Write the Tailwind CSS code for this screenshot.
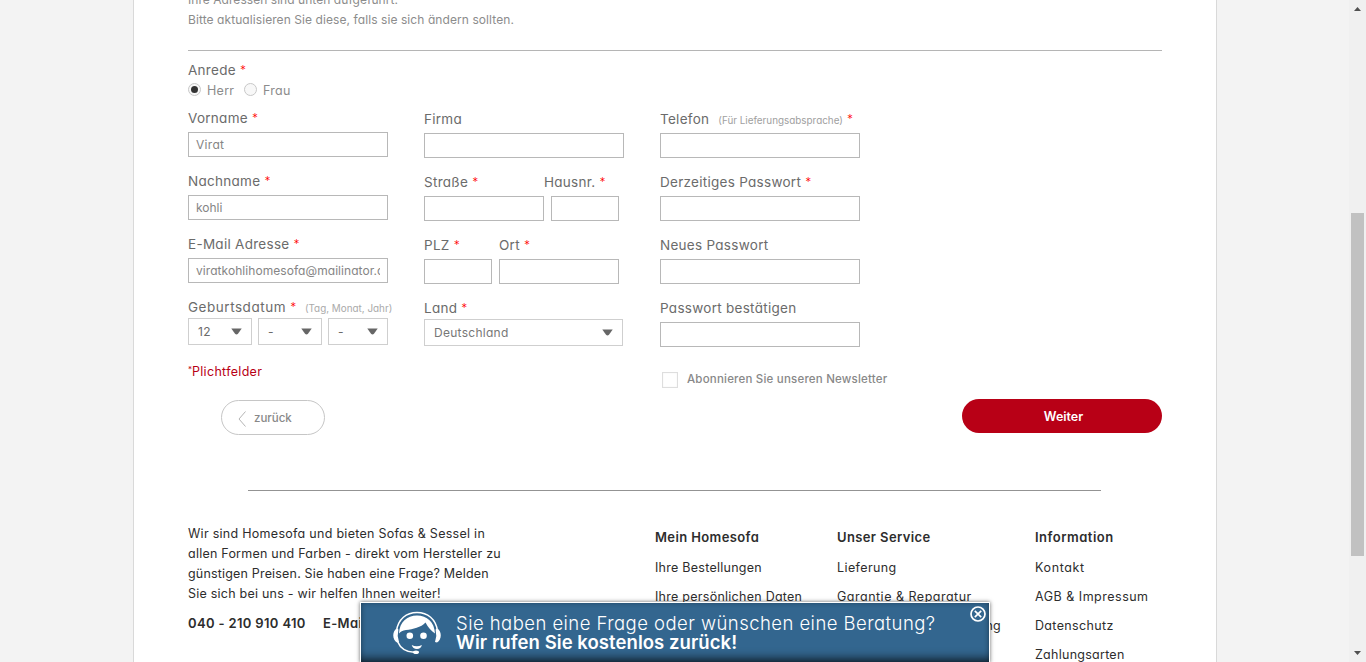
<!DOCTYPE html>
<html lang="de">
<head>
<meta charset="utf-8">
<title>Homesofa</title>
<script src="https://cdn.jsdelivr.net/npm/@tailwindcss/browser@4"></script>
</head>
<body class="relative h-[662px] overflow-hidden bg-[#f3f3f3] font-['Inter',sans-serif] [font-feature-settings:'cv11'] text-[13.5px] leading-5 tracking-[0.28px] text-[#6b6b6b] whitespace-nowrap">
<div class="flex h-full">
<main class="ml-[133px] h-full w-[1084px] overflow-hidden border-x border-[#d9d9d9] bg-white pl-[54px] pr-[54px]">
  <div class="-mt-[10px] box-content h-[60px] border-b border-[#b5b5b5] text-[12px] tracking-[0.08px] text-[#8c8c8c]">
    <p class="tracking-[0.05px]">Ihre Adressen sind unten aufgeführt.</p>
    <p>Bitte aktualisieren Sie diese, falls sie sich ändern sollten.</p>
  </div>
  <div class="mt-[9px] h-5">Anrede <span class="align-[1px] text-[12px] leading-none font-light text-[#ff0000]">*</span></div>
  <div class="flex h-5 text-[12.5px] leading-[21px] text-[#8c8c8c]">
    <span class="mt-[3px] flex size-[13px] items-center justify-center rounded-full border border-[#c8c8c8] bg-[#f8f8f8]"><span class="size-[7px] rounded-full bg-[#333]"></span></span>
    <span class="ml-[6px] w-[37px]">Herr</span>
    <span class="mt-[3px] size-[13px] rounded-full border border-[#c8c8c8] bg-[#f8f8f8]"></span>
    <span class="ml-[6px]">Frau</span>
  </div>

  <section class="flex h-[260px]">
    <div class="w-[236px] pt-2">
      <div class="h-[63px]"><div class="h-5">Vorname <span class="align-[1px] text-[12px] leading-none font-light text-[#ff0000]">*</span></div><div class="mt-1 h-[25px] w-[200px] border border-[#b8b8b8] px-[7px] text-[12px] leading-6 tracking-[0.3px] text-[#858585]">Virat</div></div>
      <div class="h-[63px]"><div class="h-5">Nachname <span class="align-[1px] text-[12px] leading-none font-light text-[#ff0000]">*</span></div><div class="mt-1 h-[25px] w-[200px] border border-[#b8b8b8] px-[7px] text-[12px] leading-6 tracking-normal text-[#858585]">kohli</div></div>
      <div class="h-[63px]"><div class="h-5">E-Mail Adresse <span class="align-[1px] text-[12px] leading-none font-light text-[#ff0000]">*</span></div><div class="mt-1 h-[25px] w-[200px] border border-[#b8b8b8] px-[7px] text-[12px] leading-6 tracking-[0.06px] text-[#858585]"><div class="overflow-hidden">viratkohlihomesofa@mailinator.com</div></div></div>
      <div class="h-5 tracking-[0.53px]">Geburtsdatum <span class="align-[1px] text-[12px] leading-none font-light text-[#ff0000]">*</span><span class="ml-[8px] text-[9.9px] leading-none tracking-normal text-[#aaa]">(Tag, Monat, Jahr)</span></div>
      <div class="mt-px flex gap-[6px] text-[12px] leading-[26px]">
        <div class="flex h-[27px] w-16 justify-between border border-[#cfcfcf] pl-[9px] pr-[9px]"><span>12</span><svg class="mt-[9px]" width="11" height="7"><path d="M.3.5h10.4L7 5.8Q5.5 7 4 5.8z" fill="#666"/></svg></div>
        <div class="flex h-[27px] w-16 justify-between border border-[#cfcfcf] pl-[9px] pr-[9px]"><span>-</span><svg class="mt-[9px]" width="11" height="7"><path d="M.3.5h10.4L7 5.8Q5.5 7 4 5.8z" fill="#666"/></svg></div>
        <div class="flex h-[27px] w-[60px] justify-between border border-[#cfcfcf] pl-[9px] pr-[9px]"><span>-</span><svg class="mt-[9px]" width="11" height="7"><path d="M.3.5h10.4L7 5.8Q5.5 7 4 5.8z" fill="#666"/></svg></div>
      </div>
    </div>
    <div class="w-[236px] pt-[9px]">
      <div class="h-[63px]"><div class="h-5">Firma</div><div class="mt-1 h-[25px] w-[200px] border border-[#b8b8b8]"></div></div>
      <div class="h-[63px]"><div class="flex h-5"><span class="w-[120px]">Straße <span class="align-[1px] text-[12px] leading-none font-light text-[#ff0000]">*</span></span><span>Hausnr. <span class="align-[1px] text-[12px] leading-none font-light text-[#ff0000]">*</span></span></div>
        <div class="mt-1 flex gap-[7px]"><div class="h-[25px] w-[120px] border border-[#b8b8b8]"></div><div class="h-[25px] w-[68px] border border-[#b8b8b8]"></div></div></div>
      <div class="h-[63px]"><div class="flex h-5"><span class="w-[75px]">PLZ <span class="align-[1px] text-[12px] leading-none font-light text-[#ff0000]">*</span></span><span>Ort <span class="align-[1px] text-[12px] leading-none font-light text-[#ff0000]">*</span></span></div>
        <div class="mt-1 flex gap-[7px]"><div class="h-[25px] w-[68px] border border-[#b8b8b8]"></div><div class="h-[25px] w-[120px] border border-[#b8b8b8]"></div></div></div>
      <div class="h-5">Land <span class="align-[1px] text-[12px] leading-none font-light text-[#ff0000]">*</span></div>
      <div class="mt-px flex h-[27px] w-[199px] justify-between border border-[#cfcfcf] pl-[9px] pr-[9px] text-[12px] leading-[26px] text-[#777]"><span>Deutschland</span><svg class="mt-[9px]" width="11" height="7"><path d="M.3.5h10.4L7 5.8Q5.5 7 4 5.8z" fill="#666"/></svg></div>
    </div>
    <div class="pt-[9px]">
      <div class="h-[63px]"><div class="h-5">Telefon<span class="ml-[9px] text-[9.9px] leading-none tracking-normal text-[#a0a0a0]">(Für Lieferungsabsprache)</span> <span class="align-[1px] text-[12px] leading-none font-light text-[#ff0000]">*</span></div><div class="mt-1 h-[25px] w-[200px] border border-[#b8b8b8]"></div></div>
      <div class="h-[63px]"><div class="h-5">Derzeitiges Passwort <span class="align-[1px] text-[12px] leading-none font-light text-[#ff0000]">*</span></div><div class="mt-1 h-[25px] w-[200px] border border-[#b8b8b8]"></div></div>
      <div class="h-[63px]"><div class="h-5">Neues Passwort</div><div class="mt-1 h-[25px] w-[200px] border border-[#b8b8b8]"></div></div>
      <div class="h-5">Passwort bestätigen</div><div class="mt-1 h-[25px] w-[200px] border border-[#b8b8b8]"></div>
    </div>
  </section>

  <div class="flex h-[39px]">
    <div class="flex w-[474px] pt-[2px] text-[12.5px] tracking-[0.3px] text-[#b80016]"><span class="-mt-[3px] w-[4px] text-[8px]">*</span><span>Plichtfelder</span></div>
    <div class="mt-[12px] size-4 border border-[#dedede] shadow-[inset_0_0_1px_#ddd]"></div>
    <div class="ml-[9px] pt-[9px] text-[11.5px] font-medium tracking-[0.2px] text-[#888]">Abonnieren Sie unseren Newsletter</div>
  </div>

  <div class="flex items-start justify-between pl-[33px] tracking-normal">
    <div class="mt-px flex h-[35px] w-[104px] items-center rounded-full border border-[#c6c6c6] pl-4 text-[11.5px] font-medium text-[#888]"><svg class="mr-2 mt-[3px]" width="8" height="16" fill="none" stroke="#b5b5b5" stroke-width="1"><path d="M7.5.5 1 8l6.500 7.500"/></svg>zurück</div>
    <div class="flex h-[34px] w-[200px] items-center justify-center rounded-full bg-[#b80016] pl-[3px] pt-px text-[12.5px] font-semibold text-white">Weiter</div>
  </div>

  <div class="ml-[60px] mt-[55px] w-[853px] border-t border-[#939393]"></div>

  <footer class="mt-[33px] flex text-[12.5px] tracking-[0.26px] text-[#2d2d2d]">
    <div class="w-[467px]">
      <p class="tracking-[0.28px]">Wir sind Homesofa und bieten Sofas &amp; Sessel in</p>
      <p class="tracking-[0.23px]">allen Formen und Farben - direkt vom Hersteller zu</p>
      <p class="tracking-[0.18px]">günstigen Preisen. Sie haben eine Frage? Melden</p>
      <p class="tracking-[0.23px]">Sie sich bei uns - wir helfen Ihnen weiter!</p>
      <p class="mt-[9px] text-[13px] font-semibold tracking-[0.35px]"><span class="inline-block w-[135px]">040 - 210 910 410</span><span>E-Mail</span></p>
    </div>
    <ul class="w-[182px] space-y-[9px] pt-[3px]">
      <li class="mb-[11px] text-[13px] font-semibold tracking-[0.38px]">Mein Homesofa</li>
      <li>Ihre Bestellungen</li>
      <li>Ihre persönlichen Daten</li>
    </ul>
    <ul class="w-[198px] space-y-[9px] pt-[3px]">
      <li class="mb-[11px] text-[13px] font-semibold tracking-[0.38px]">Unser Service</li>
      <li class="tracking-[0.4px]">Lieferung</li>
      <li class="tracking-[0.5px]">Garantie &amp; Reparatur</li>
      <li class="w-[164px] text-right">Beratung</li>
    </ul>
    <ul class="space-y-[9px] pt-[3px]">
      <li class="mb-[11px] text-[13px] font-semibold tracking-[0.5px]">Information</li>
      <li class="tracking-[0.62px]">Kontakt</li>
      <li class="tracking-[0.5px]">AGB &amp; Impressum</li>
      <li class="tracking-[0.35px]">Datenschutz</li>
      <li>Zahlungsarten</li>
    </ul>
  </footer>
</main>

<div class="ml-auto flex h-full w-[17px] flex-col items-center bg-[#f0f0f0]">
  <svg class="mt-[7px]" width="7" height="4"><path d="M0 4 3.500 0 7 4z" fill="#505050"/></svg>
  <div class="mt-[202px] h-[343px] w-[13px] bg-[#c1c1c1]"></div>
  <svg class="mb-[7px] mt-auto" width="7" height="4"><path d="M0 0h7L3.500 4z" fill="#505050"/></svg>
</div>
</div>

<!-- Callback banner pinned to the bottom of the viewport -->
<div class="absolute left-[360px] top-[602px] flex h-[61px] w-[630px] border border-white bg-[#33668f] pl-8 text-white shadow-[0_0_4px_rgba(0,0,0,0.6)]">
  <div class="absolute inset-0 shadow-[inset_0_-9px_10px_-5px_rgba(0,0,0,0.6),inset_0_0_5px_rgba(0,0,0,0.3)]"></div>
  <svg class="relative mt-[8px]" width="49" height="45" viewBox="0 0 49 45" fill="none" stroke="#fff">
    <path d="M3.500 20C5 8 13.500 1.500 24 1.500S43 8 44.500 20" stroke-width="1.500"/>
    <path d="M6 22.500C6.500 11 14 4.500 24 4.500s17.500 6.500 18 18C38.500 20 35 16.500 32.500 11.500 28 16.500 20 18.200 13 19 9.500 19.500 7.500 20.800 6 22.500z" fill="#fff" stroke="none"/>
    <path d="M4 17.500C-1 19.500-1 29 4 31.500L6 31 4.700 25l.7-6.500zM44 17.500c5 2 5 11.500 0 14L42 31 43.300 25l-.7-6.500z" fill="#fff" stroke="none"/>
    <path d="M4.500 30.500C7.500 37.500 13 41 21 41.300" stroke-width="1.600"/>
    <ellipse cx="23" cy="41.300" rx="3" ry="1.800" fill="#fff" stroke="none"/>
    <circle cx="16.800" cy="24.800" r="3.300" fill="#fff" stroke="none"/><circle cx="30.500" cy="24.800" r="3.300" fill="#fff" stroke="none"/>
    <path d="M18.700 34q5 2.400 10.200 0-1 4-5 4t-5.200-4z" fill="#fff" stroke="none"/>
  </svg>
  <div class="relative ml-[14px] mt-[11px] text-[18.500px] leading-[19px]">
    <p class="font-light tracking-[0.45px]">Sie haben eine Frage oder wünschen eine Beratung?</p>
    <p class="font-semibold tracking-[0.06px]">Wir rufen Sie kostenlos zurück!</p>
  </div>
  <svg class="absolute right-[3px] top-[3px]" width="16" height="16" fill="none" stroke="#fff"><circle cx="8" cy="8" r="7" stroke-width="1.700"/><path d="m4.800 4.800 6.400 6.400m0-6.400-6.400 6.400" stroke-width="1.700"/></svg>
</div>
</body>
</html>
